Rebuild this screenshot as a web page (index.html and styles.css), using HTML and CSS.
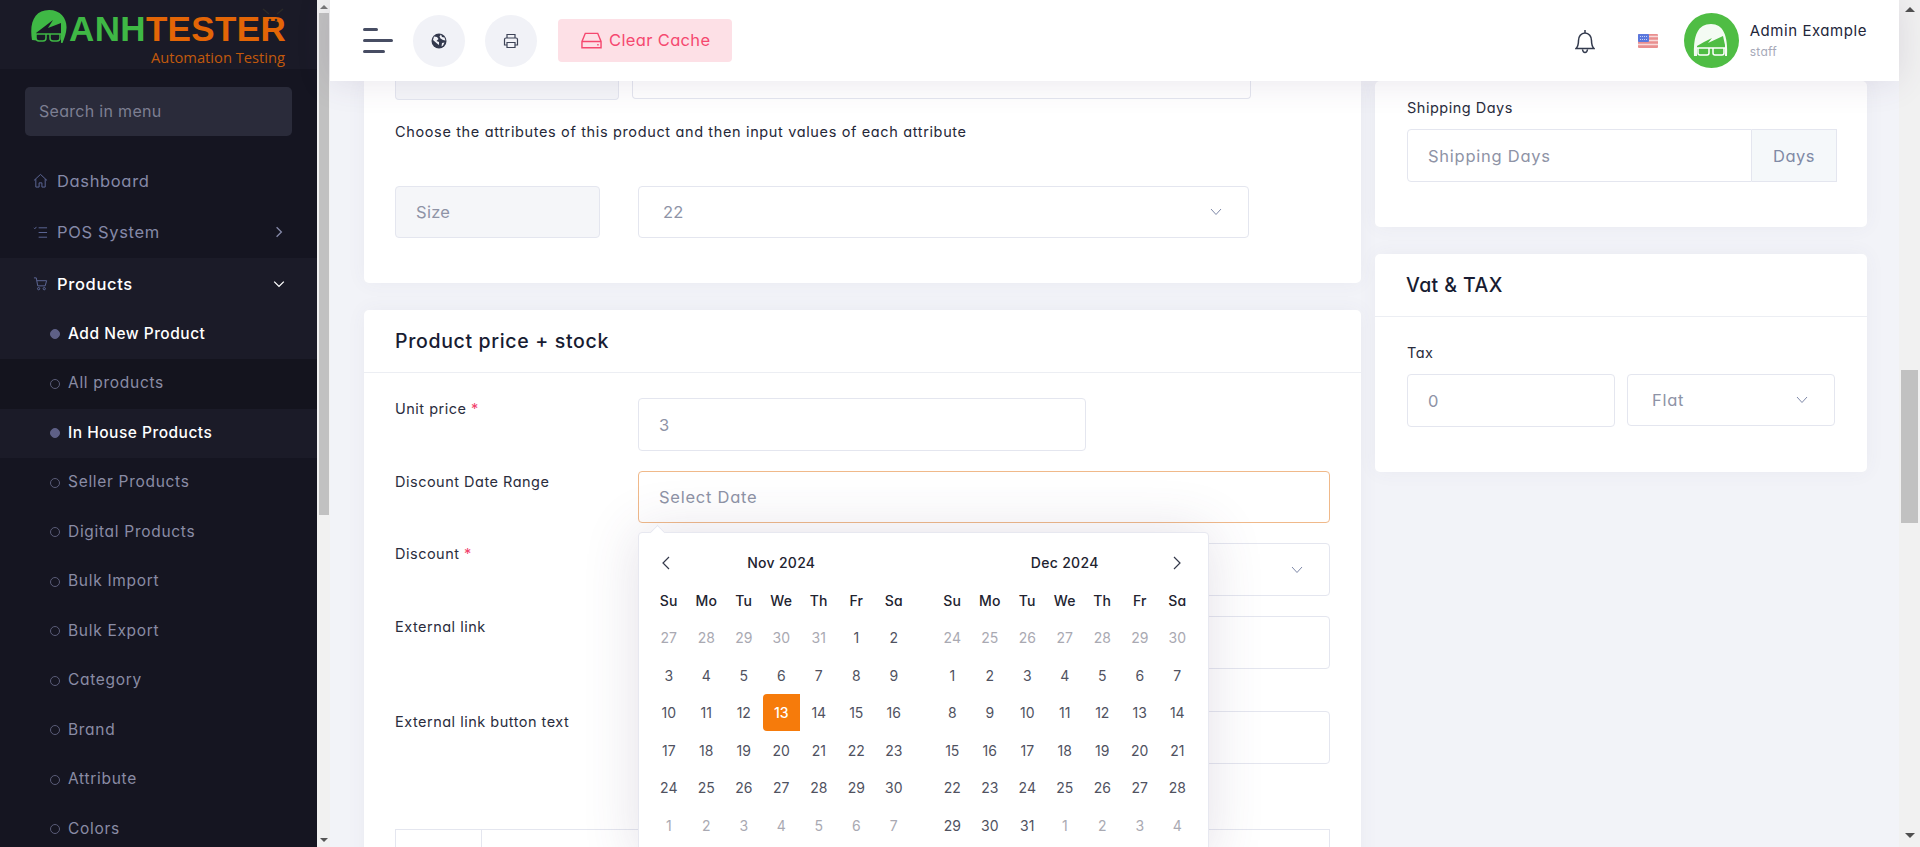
FILE: index.html
```html
<!DOCTYPE html>
<html lang="en">
<head>
<meta charset="utf-8">
<title>Add New Product</title>
<link rel="stylesheet" href="styles.css">
</head>
<body>
<div class="app">
  <aside class="sidebar">
    <div class="brand">
      <svg class="brand-head" viewBox="0 0 36 33" aria-hidden="true">
        <path class="hair" d="M1 30C-2 12 4 0 18 0c12 0 18 9 17.500 18-.2 5-2 10-4 15L1 30z"/>
        <path class="face" d="M5 33V23L22 10l-5 8 13-5v20z"/>
        <path class="glass" d="M2 24h30M5 24h10v4c0 2-1 3-3 3H8c-2 0-3-1-3-3zM19 24h10v4c0 2-1 3-3 3h-4c-2 0-3-1-3-3z"/>
      </svg>
      <div class="brand-text">
        <div class="brand-name"><span class="brand-green">ANH</span><span class="brand-orange">TESTER</span></div>
        <div class="brand-sub">Automation Testing</div>
      </div>
      <svg class="brand-bug" viewBox="0 0 22 18" aria-hidden="true">
        <path d="M1 1l6 5M21 1l-6 5" fill="none" stroke="#2b2a28" stroke-width="1.500"/>
        <circle cx="8" cy="12" r="1.300" fill="#2b2a28"/><circle cx="14" cy="12" r="1.300" fill="#2b2a28"/>
      </svg>
    </div>
    <div class="search">Search in menu</div>
    <nav class="nav">
      <a class="nav-item">
        <svg class="nav-icon" viewBox="0 0 16 16"><path d="M1 8l7-6.500L15 8M3 6.500V15h3.500v-4.500h3V15H13V6.500"/></svg>
        <span>Dashboard</span>
      </a>
      <a class="nav-item">
        <svg class="nav-icon" viewBox="0 0 16 16"><path d="M6 3h9M6 8h9M6 13h9M1 3l1 1 1.600-2"/></svg>
        <span>POS System</span>
        <svg class="nav-chev" viewBox="0 0 10 10"><path d="M3 1l4 4-4 4"/></svg>
      </a>
      <a class="nav-item nav-open">
        <svg class="nav-icon" viewBox="0 0 16 16"><path d="M1 2h2.500l1.500 8.500h8L14.500 5H4"/><circle cx="6" cy="13.500" r="1.200"/><circle cx="12" cy="13.500" r="1.200"/></svg>
        <span>Products</span>
        <svg class="nav-chev nav-chev-open" viewBox="0 0 10 10"><path d="M1 3l4 4 4-4"/></svg>
      </a>
      <a class="sub-item sub-active sub-first">Add New Product</a>
      <a class="sub-item sub-dark">All products</a>
      <a class="sub-item sub-active">In House Products</a>
      <a class="sub-item">Seller Products</a>
      <a class="sub-item">Digital Products</a>
      <a class="sub-item">Bulk Import</a>
      <a class="sub-item">Bulk Export</a>
      <a class="sub-item">Category</a>
      <a class="sub-item">Brand</a>
      <a class="sub-item">Attribute</a>
      <a class="sub-item">Colors</a>
    </nav>
  </aside>

  <div class="scrollbar scrollbar-side">
    <span class="sb-up"></span>
    <span class="sb-thumb"></span>
    <span class="sb-fill"></span>
    <span class="sb-down"></span>
  </div>

  <main class="main">
    <header class="topbar">
      <div class="burger"><i class="b1"></i><i class="b2"></i><i class="b3"></i></div>
      <button class="round-btn">
        <svg class="ic-16" viewBox="0 0 16 16"><circle cx="8" cy="8" r="7.500" fill="#33394d"/><path d="M3 3.500l3 .5 1.500 2-2 2 2.500 1v3L6 10.500 2 7zM10 1.500l1 2.500 2.500.5 1 3-2.500-.5-2.500-1.500-1-2zM11 10l2.500-.5-1.500 3-1.500 1z" fill="#f1f2f7"/></svg>
      </button>
      <button class="round-btn">
        <svg class="ic-16 ic-line" viewBox="0 0 16 16"><path d="M4 5V1.500h8V5M4 12H1.500V6.500c0-1 .5-1.500 1.500-1.500h10c1 0 1.500.5 1.500 1.500V12H12M4 9.500h8v5H4z"/></svg>
      </button>
      <button class="cache-btn">
        <svg class="cache-ic" viewBox="0 0 22 17"><path d="M1 9.500L4.500 1h13L21 9.500V16H1zM1 9.500h20M17 13h1.500"/></svg>
        <span>Clear Cache</span>
      </button>
      <div class="top-right">
        <svg class="bell" viewBox="0 0 20 26"><path d="M1 20.500h18c-2-2-2.500-4-2.500-8 0-4-2.500-7.500-6.500-7.500S3.500 8.500 3.500 12.500c0 4-.5 6-2.500 8zM10 2v3M7.500 21.500c.3 2 1.300 3 2.500 3s2.200-1 2.500-3"/></svg>
        <svg class="flag" viewBox="0 0 20 14">
          <rect width="20" height="14" rx="1" fill="#e98f8f"/>
          <path d="M0 2.500h20M0 6.500h20M0 10.500h20" stroke="#f7dada" stroke-width="1.500"/>
          <rect width="11" height="8" rx="1" fill="#5b78dd"/>
          <path d="M2 2.500h7M2 5.500h7" stroke="#c6d2f5" stroke-width="1" stroke-dasharray="1 1"/>
        </svg>
        <svg class="avatar" viewBox="0 0 55 55">
          <circle cx="27.500" cy="27.500" r="27.500" fill="#4fbd44"/>
          <path d="M10 43C9 22 14 11 27 11c12 0 17 11 16 32z" fill="#f4fbf3"/>
          <path d="M13 45V33l7-4 8-4-4 5 15-7 2 9v13z" fill="#4fbd44"/>
          <path d="M13 35h28M14 35h11v5c0 1-1 2-2 2h-7c-1 0-2-1-2-2zM29 35h11v5c0 1-1 2-2 2h-7c-1 0-2-1-2-2z" fill="none" stroke="#fff" stroke-width="1.500"/>
        </svg>
        <div class="user">
          <div class="user-name">Admin Example</div>
          <div class="user-role">staff</div>
        </div>
      </div>
    </header>

    <div class="content">
      <div class="col">
        <section class="card card-attrs">
          <div class="stub-row"><div class="stub stub-grey"></div><div class="stub stub-white"></div></div>
          <p class="attr-note">Choose the attributes of this product and then input values of each attribute</p>
          <div class="size-row">
            <div class="field field-grey size-name">Size</div>
            <div class="field select size-value"><span>22</span><svg class="chev" viewBox="0 0 12 8"><path d="M1 1l5 5.500L11 1"/></svg></div>
          </div>
        </section>

        <section class="card card-price">
          <h2 class="card-title">Product price + stock</h2>
          <div class="form">
            <div class="row">
              <label class="label">Unit price <b class="req">*</b></label>
              <div class="field unit-field">3</div>
            </div>
            <div class="row">
              <label class="label">Discount Date Range</label>
              <div class="date-wrap">
                <div class="field field-focus">Select Date</div>
                <div class="picker">
                  <div class="cal">
                    <svg class="cal-arrow cal-prev" viewBox="0 0 10 16"><path d="M8 2L2 8l6 6"/></svg>
                    <div class="cal-title">Nov 2024</div>
                    <span></span>
                    <b>Su</b><b>Mo</b><b>Tu</b><b>We</b><b>Th</b><b>Fr</b><b>Sa</b>
                    <i class="off">27</i><i class="off">28</i><i class="off">29</i><i class="off">30</i><i class="off">31</i><i>1</i><i>2</i>
                    <i>3</i><i>4</i><i>5</i><i>6</i><i>7</i><i>8</i><i>9</i>
                    <i>10</i><i>11</i><i>12</i><i class="today">13</i><i>14</i><i>15</i><i>16</i>
                    <i>17</i><i>18</i><i>19</i><i>20</i><i>21</i><i>22</i><i>23</i>
                    <i>24</i><i>25</i><i>26</i><i>27</i><i>28</i><i>29</i><i>30</i>
                    <i class="off">1</i><i class="off">2</i><i class="off">3</i><i class="off">4</i><i class="off">5</i><i class="off">6</i><i class="off">7</i>
                  </div>
                  <div class="cal">
                    <span></span>
                    <div class="cal-title">Dec 2024</div>
                    <svg class="cal-arrow" viewBox="0 0 10 16"><path d="M2 2l6 6-6 6"/></svg>
                    <b>Su</b><b>Mo</b><b>Tu</b><b>We</b><b>Th</b><b>Fr</b><b>Sa</b>
                    <i class="off">24</i><i class="off">25</i><i class="off">26</i><i class="off">27</i><i class="off">28</i><i class="off">29</i><i class="off">30</i>
                    <i>1</i><i>2</i><i>3</i><i>4</i><i>5</i><i>6</i><i>7</i>
                    <i>8</i><i>9</i><i>10</i><i>11</i><i>12</i><i>13</i><i>14</i>
                    <i>15</i><i>16</i><i>17</i><i>18</i><i>19</i><i>20</i><i>21</i>
                    <i>22</i><i>23</i><i>24</i><i>25</i><i>26</i><i>27</i><i>28</i>
                    <i>29</i><i>30</i><i>31</i><i class="off">1</i><i class="off">2</i><i class="off">3</i><i class="off">4</i>
                  </div>
                </div>
              </div>
            </div>
            <div class="row">
              <label class="label">Discount <b class="req">*</b></label>
              <div class="field field-tall select select-end"><svg class="chev" viewBox="0 0 12 8"><path d="M1 1l5 5.500L11 1"/></svg></div>
            </div>
            <div class="row row-tall">
              <label class="label">External link</label>
              <div class="field field-tall"></div>
            </div>
            <div class="row">
              <label class="label">External link button text</label>
              <div class="field field-tall"></div>
            </div>
            <div class="variant-table"><div class="vt-cell"></div><div class="vt-cell vt-rest"></div></div>
          </div>
        </section>
      </div>

      <div class="col">
        <section class="card card-ship">
          <label class="label-top ship-label">Shipping Days</label>
          <div class="group">
            <div class="field group-input">Shipping Days</div>
            <div class="group-add">Days</div>
          </div>
        </section>
        <section class="card card-vat">
          <h2 class="card-title card-title-side">Vat &amp; TAX</h2>
          <div class="vat-body">
            <label class="label-top">Tax</label>
            <div class="vat-row">
              <div class="field vat-input">0</div>
              <div class="field select vat-select"><span>Flat</span><svg class="chev" viewBox="0 0 12 8"><path d="M1 1l5 5.500L11 1"/></svg></div>
            </div>
          </div>
        </section>
      </div>
    </div>
  </main>

  <div class="scrollbar scrollbar-page">
    <span class="sb-up"></span>
    <span class="sb-fill sb-fill-a"></span>
    <span class="sb-thumb"></span>
    <span class="sb-fill"></span>
    <span class="sb-down"></span>
  </div>
</div>
</body>
</html>
```

FILE: styles.css
```css
* { box-sizing: border-box; }
html, body { margin: 0; height: 847px; overflow: hidden; }
body {
  font-family: Inter, "Open Sans", "Liberation Sans", sans-serif;
  font-feature-settings: "cv11" 1;
  font-size: 14px;
  color: #1e2130;
  background: #f2f3f8;
}
.app { display: flex; height: 847px; }

/* sidebar */
.sidebar { width: 317px; flex: none; background: #151521; color: #8b8fa8; overflow: hidden; }
.brand { height: 69px; background: #1a1a27; display: flex; padding: 10px 0 0 31px; gap: 2px; position: relative; }
.brand-head { width: 36px; height: 33px; flex: none; }
.hair { fill: #3fb845; }
.face { fill: #1a1a27; }
.glass { fill: none; stroke: #3fb845; stroke-width: 1.500; }
.brand-text { width: 218px; padding-top: 2px; }
.brand-name { font-family: "Liberation Sans", sans-serif; font-feature-settings: normal; font-weight: 700; font-size: 35px; line-height: 34px; letter-spacing: .35px; white-space: nowrap; }
.brand-green { color: #3fb845; }
.brand-orange { color: #e36506; }
.brand-sub { font-family: "Open Sans", sans-serif; font-feature-settings: normal; font-size: 14.700px; line-height: 20px; color: #c2590c; text-align: right; margin-top: 1px; padding-right: 2px; }
.brand-bug { position: absolute; left: 262px; top: 8px; width: 22px; height: 18px; }
.search { margin: 18px 25px 19px; height: 49px; padding: 0 14px; line-height: 49px; background: #2a2b3a; border-radius: 5px; color: #7d7f92; font-size: 16px; letter-spacing: .3px; }
.nav-item { display: flex; align-items: center; height: 51.500px; padding-left: 33px; padding-right: 32px; font-size: 16.500px; letter-spacing: .65px; color: #8589a8; }
.nav-item span { flex: 1; margin-left: 9px; }
.nav-icon { width: 15px; height: 15px; flex: none; fill: none; stroke: #5f6a9a; stroke-width: 1; }
.nav-chev { width: 12px; height: 12px; fill: none; stroke: #8589a8; stroke-width: 1.100; }
.nav-chev-open { stroke: #fff; }
.nav-open { background: #1b1b28; color: #fff; font-weight: 500; }
.sub-item { display: flex; align-items: center; height: 49.500px; padding: 0 0 2px 50px; font-size: 15.500px; letter-spacing: .7px; color: #8a8ca5; }
.sub-item::before { content: ""; width: 8px; height: 8px; margin: 2px 8px 0 0; flex: none; border: 1px solid #5a5c78; border-radius: 50%; }
.sub-active { color: #fff; font-weight: 500; background: #1b1b28; letter-spacing: .5px; }
.sub-active::before { background: #5e6086; border-color: #5e6086; }
.sub-dark { background: #14141e; }

/* scrollbars */
.scrollbar { flex: none; display: flex; flex-direction: column; align-items: center; background: #f1f1f1; }
.scrollbar-side { width: 13px; }
.scrollbar-page { width: 21px; }
.sb-up, .sb-down { flex: none; width: 0; height: 0; border-left: 4px solid transparent; border-right: 4px solid transparent; }
.sb-up { margin: 5px 0 4px; border-bottom: 4px solid #777; }
.sb-down { margin: 4px 0 5px; border-top: 4px solid #555; }
.sb-thumb { flex: none; width: 10px; height: 502px; background: #c1c1c1; }
.sb-fill { flex: 1; }
.scrollbar-page .sb-up { margin: 7px 0 4px; border-left-width: 5px; border-right-width: 5px; border-bottom: 5px solid #505050; }
.scrollbar-page .sb-down { margin: 4px 0 9px; border-left-width: 5px; border-right-width: 5px; border-top: 5px solid #505050; }
.scrollbar-page .sb-thumb { width: 17px; height: 153px; }
.sb-fill-a { flex: none; height: 354px; }

/* main */
.main { flex: 1; min-width: 0; display: flex; flex-direction: column; }
.topbar { height: 81px; flex: none; background: #fff; display: flex; align-items: center; padding: 0 32px 0 33px; box-shadow: 0 0 35px rgba(82, 63, 105, .14); position: relative; z-index: 3; }
.burger { width: 30px; height: 25px; display: flex; flex-direction: column; justify-content: space-between; margin-right: 20px; }
.burger i { display: block; height: 3px; background: #474d63; border-radius: 2px; }
.b1 { width: 15px; }
.b2 { width: 30px; }
.b3 { width: 22px; }
.round-btn { width: 52px; height: 52px; border: 0; border-radius: 50%; background: #f1f2f7; margin-right: 20px; padding: 0; display: flex; align-items: center; justify-content: center; }
.ic-16 { width: 16px; height: 16px; }
.ic-line { fill: none; stroke: #3d4357; stroke-width: 1.200; }
.cache-btn { height: 43px; width: 174px; margin-left: 1px; border: 0; border-radius: 4px; background: #fde0e6; color: #f5486f; font: inherit; font-size: 16.500px; letter-spacing: .35px; display: flex; align-items: center; padding: 0 0 2px 23px; gap: 7px; }
.cache-ic { width: 21px; height: 17px; fill: none; stroke: #f5486f; stroke-width: 1.500; margin-top: 2px; }
.top-right { margin-left: auto; display: flex; align-items: center; }
.bell { width: 20px; height: 26px; fill: none; stroke: #333a4d; stroke-width: 1.500; margin-right: 43px; }
.flag { width: 20px; height: 14px; margin-right: 26px; }
.avatar { width: 55px; height: 55px; margin-right: 11px; }
.user-name { font-size: 15px; letter-spacing: .55px; color: #23263a; line-height: 20px; margin-bottom: 1px; margin-top: 2px; }
.user-role { font-size: 12px; color: #a6a9b8; letter-spacing: .3px; line-height: 20px; }

/* content */
.content { flex: 1; min-height: 0; overflow: hidden; display: grid; grid-template-columns: 997px 492px; column-gap: 14px; padding: 0 32px 0 34px; }
.col { display: flex; flex-direction: column; gap: 27px; }
.card { background: #fff; border-radius: 5px; box-shadow: 0 0 20px rgba(76, 87, 125, .05); flex: none; }
.card-attrs { height: 202px; padding: 0 31px; border-radius: 0 0 5px 5px; }
.stub-row { display: flex; gap: 13px; }
.stub { height: 19px; border: 1px solid #e4e6ef; border-top: 0; border-radius: 0 0 4px 4px; }
.stub-grey { width: 224px; background: #f5f6f9; }
.stub-white { width: 619px; height: 18px; }
.attr-note { margin: 21px 0 0; font-size: 14.500px; line-height: 22px; letter-spacing: .64px; color: #252838; }
.size-row { display: flex; gap: 38px; margin-top: 43px; }

.field { display: flex; align-items: center; height: 52px; border: 1px solid #e4e6ef; border-radius: 4px; padding: 0 20px; font-size: 16.500px; letter-spacing: .75px; color: #8e93a6; background: #fff; }
.field-grey { background: #f5f6f9; }
.field-tall { height: 53px; }
.select { justify-content: space-between; }
.select-end { justify-content: flex-end; padding-right: 26px; }
.chev { width: 12px; height: 8px; fill: none; stroke: #7e88a8; stroke-width: 1; }
.size-name { width: 205px; height: 52px; letter-spacing: .3px; }
.size-value { width: 611px; height: 52px; padding-left: 24px; padding-right: 26px; letter-spacing: .3px; }

.card-price { height: 600px; }
.card-title { margin: 0; height: 63px; padding-left: 31px; border-bottom: 1px solid #eceef3; font-size: 19.500px; font-weight: 500; line-height: 63px; letter-spacing: .66px; color: #181c32; }
.form { padding: 25px 31px 0; }
.row { display: grid; grid-template-columns: 243px 692px; margin-bottom: 20px; }
.row-tall { margin-bottom: 42px; }
.label { font-size: 14.500px; line-height: 22px; letter-spacing: .5px; color: #2a2d3d; }
.req { color: #f1416c; font-weight: 400; }
.unit-field { width: 448px; height: 53px; letter-spacing: .3px; }
.date-wrap { position: relative; }
.field-focus { border-color: #f0b98a; height: 52px; }
.variant-table { display: flex; height: 40px; margin-top: 65px; width: 935px; border: 1px solid #e4e6ef; border-bottom: 0; }
.vt-cell { width: 86px; border-right: 1px solid #e4e6ef; }
.vt-rest { flex: 1; border-right: 0; }

/* date picker */
.picker { position: absolute; left: 0; top: 61px; width: 571px; height: 330px; background: #fff; border: 1px solid #e7e8f0; border-radius: 4px; padding: 11px 0 0 11px; display: flex; gap: 21px; box-shadow: 0 0 55px rgba(82, 63, 105, .16); z-index: 2; }
.picker::before { content: ""; position: absolute; left: 13px; top: -6px; width: 10px; height: 10px; background: #fff; border: 1px solid #e7e8f0; border-width: 1px 0 0 1px; transform: rotate(45deg); }
.cal { display: grid; grid-template-columns: repeat(7, 37.500px); grid-auto-rows: 37.500px; align-items: center; justify-items: center; text-align: center; font-size: 14px; }
.cal b { font-weight: 500; color: #22232f; letter-spacing: .2px; }
.cal i { font-style: normal; color: #50525f; }
.cal i.off { color: #a9a9b2; }
.cal i.today { width: 37px; height: 37px; line-height: 37px; background: #f67b0b; color: #fff; border-radius: 4px 0 0 4px; font-weight: 500; }
.cal-title { grid-column: span 5; font-weight: 500; color: #22232f; letter-spacing: .3px; }
.cal-arrow { width: 10px; height: 16px; fill: none; stroke: #33384a; stroke-width: 1.200; }
.cal-prev { justify-self: start; margin-left: 11px; }

/* right column */
.card-ship { height: 146px; padding: 16px 30px 0 32px; }
.label-top { display: block; font-size: 14.500px; line-height: 22px; letter-spacing: .5px; color: #2a2d3d; }
.ship-label { margin-bottom: 10px; }
.group { display: flex; }
.group-input { flex: none; width: 345px; height: 53px; border-radius: 4px 0 0 4px; }
.group-add { flex: none; width: 85px; height: 53px; display: flex; align-items: center; justify-content: center; border: 1px solid #e4e6ef; border-left: 0; background: #f5f8fa; font-size: 16.500px; letter-spacing: .45px; color: #808aa5; }
.card-vat { height: 218px; }
.card-title-side { padding-left: 31px; letter-spacing: .4px; }
.vat-body { padding: 25px 32px 0; }
.vat-row { display: flex; gap: 12px; margin-top: 10px; align-items: flex-start; }
.vat-input { width: 208px; height: 53px; }
.vat-select { width: 208px; padding-left: 24px; padding-right: 26px; }
```
